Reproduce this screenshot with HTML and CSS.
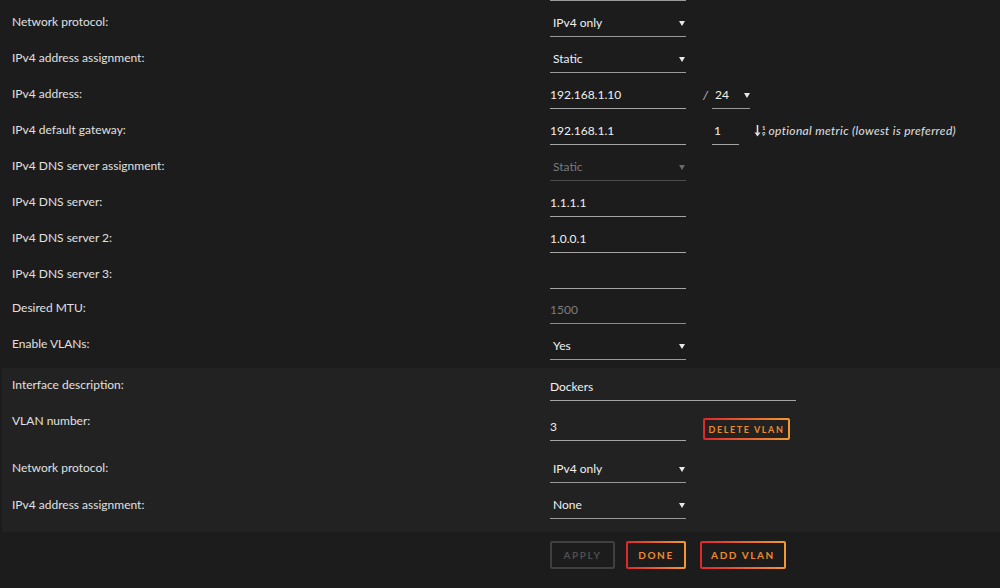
FILE: index.html
```html
<!DOCTYPE html>
<html lang="en">
<head>
    <meta charset="UTF-8">
    <meta name="viewport" content="width=device-width, initial-scale=1.0">
    <title>Network Settings</title>
    <link rel="stylesheet" href="styles.css">
</head>
<body>
    <div class="page">
        <!-- tail of the field above, scrolled off -->
        <div class="prev-row"><div class="prev-line"></div></div>

        <div class="row">
            <label class="label">Network protocol:</label>
            <div class="control"><div class="select">IPv4 only</div></div>
        </div>
        <div class="row">
            <label class="label">IPv4 address assignment:</label>
            <div class="control"><div class="select">Static</div></div>
        </div>
        <div class="row">
            <label class="label">IPv4 address:</label>
            <div class="control">
                <div class="input">192.168.1.10</div>
                <span class="slash">/</span>
                <div class="select select-small">24</div>
            </div>
        </div>
        <div class="row">
            <label class="label">IPv4 default gateway:</label>
            <div class="control">
                <div class="input">192.168.1.1</div>
                <div class="input input-metric">1</div>
                <span class="sort-icon">
                    <svg width="7" height="12" viewBox="0 0 7 12"><path d="M3.5 0v9" stroke="#ddd" stroke-width="1.6"/><path d="M0.5 7.5h6L3.5 11.5z" fill="#ddd"/></svg>
                    <span class="sort-nums"><span>1</span><span>9</span></span>
                </span>
                <span class="hint">optional metric (lowest is preferred)</span>
            </div>
        </div>
        <div class="row">
            <label class="label">IPv4 DNS server assignment:</label>
            <div class="control"><div class="select disabled">Static</div></div>
        </div>
        <div class="row">
            <label class="label">IPv4 DNS server:</label>
            <div class="control"><div class="input">1.1.1.1</div></div>
        </div>
        <div class="row">
            <label class="label">IPv4 DNS server 2:</label>
            <div class="control"><div class="input">1.0.0.1</div></div>
        </div>
        <div class="row">
            <label class="label">IPv4 DNS server 3:</label>
            <div class="control"><div class="input"></div></div>
        </div>
        <div class="row">
            <label class="label">Desired MTU:</label>
            <div class="control"><div class="input placeholder">1500</div></div>
        </div>
        <div class="row">
            <label class="label">Enable VLANs:</label>
            <div class="control"><div class="select">Yes</div></div>
        </div>

        <!-- VLAN block -->
        <div class="vlan">
            <div class="row vrow-desc">
                <label class="label">Interface description:</label>
                <div class="control"><div class="input input-wide">Dockers</div></div>
            </div>
            <div class="row vrow-number">
                <label class="label">VLAN number:</label>
                <div class="control">
                    <div class="input">3</div>
                    <button class="btn btn-small">DELETE VLAN</button>
                </div>
            </div>
            <div class="row vrow-proto">
                <label class="label">Network protocol:</label>
                <div class="control"><div class="select">IPv4 only</div></div>
            </div>
            <div class="row vrow-assign">
                <label class="label">IPv4 address assignment:</label>
                <div class="control"><div class="select">None</div></div>
            </div>
        </div>

        <div class="actions">
            <button class="btn btn-disabled">APPLY</button>
            <button class="btn btn-done">DONE</button>
            <button class="btn btn-add">ADD VLAN</button>
        </div>
    </div>
</body>
</html>
```

FILE: styles.css
```css
html, body {
    margin: 0;
    padding: 0;
    background-color: #1c1c1c;
}
body {
    font-family: Lato, "Open Sans", sans-serif;
    font-size: 12px;
    color: #e2e2e2;
}
.page {
    width: 1000px;
    height: 588px;
    overflow: hidden;
}
.prev-row {
    height: 1px;
    padding-left: 550px;
}
.prev-line {
    width: 136px;
    height: 1px;
    background-color: #9a9a9a;
}
.row {
    display: flex;
    height: 36px;
}
.label {
    width: 538px;
    padding-left: 12px;
    margin-top: 13px;
    line-height: 16px;
    color: #e0e0e0;
}
.control {
    display: flex;
    align-items: flex-start;
    margin-top: 8px;
}
.input, .select {
    position: relative;
    box-sizing: border-box;
    width: 136px;
    height: 28px;
    line-height: 28px;
    border-bottom: 1px solid #a5a5a5;
    color: #f0f0f0;
    font-size: 12px;
}
.select {
    padding-left: 3px;
    border-bottom-color: #9a9a9a;
}
.select::after {
    content: "";
    position: absolute;
    right: 1px;
    top: 12px;
    border-left: 3px solid transparent;
    border-right: 3px solid transparent;
    border-top: 5px solid #e8e8e8;
}
.select.disabled {
    color: #7a7a7a;
    border-bottom-color: #4a4a4a;
}
.select.disabled::after {
    border-top-color: #6a6a6a;
}
.input.placeholder {
    color: #7d7d7d;
    border-bottom-color: #8a8a8a;
}
.slash {
    margin-left: 17px;
    width: 9px;
    line-height: 28px;
    color: #d0d0d0;
    font-style: italic;
}
.select-small {
    width: 38px;
    margin-left: 0;
}
.select-small::after {
    right: 0;
}
.input-metric {
    width: 27px;
    margin-left: 26px;
    padding-left: 2px;
}
.sort-icon {
    display: inline-flex;
    align-items: center;
    margin-left: 15px;
    height: 28px;
    gap: 1px;
}
.sort-nums {
    display: flex;
    flex-direction: column;
    font-size: 6px;
    line-height: 6px;
    font-weight: bold;
    color: #ddd;
}
.hint {
    margin-left: 3px;
    line-height: 28px;
    font-style: italic;
    letter-spacing: 0.33px;
    color: #e0e0e0;
}
.row:nth-child(10) .label,
.row:nth-child(11) .label {
    margin-top: 11px;
}
.row:nth-child(10) .control,
.row:nth-child(11) .control {
    margin-top: 7px;
}

/* VLAN block */
.vlan {
    margin-top: 7px;
    margin-left: 2px;
    padding-bottom: 13px;
    background-color: #222222;
}
.vlan .label {
    width: 538px;
    padding-left: 10px;
}
.vrow-desc {
    height: 33px;
}
.vrow-desc .control {
    margin-top: 5px;
}
.vrow-desc .label {
    margin-top: 9px;
}
.input-wide {
    width: 246px;
}
.vrow-number {
    height: 40px;
}
.vrow-number .label {
    margin-top: 12px;
}
.vrow-number .control {
    margin-top: 12px;
}
.vrow-proto {
    height: 41px;
}
.vrow-proto .label {
    margin-top: 19px;
}
.vrow-proto .control {
    margin-top: 14px;
}
.vrow-assign {
    height: 37px;
}
.vrow-assign .label {
    margin-top: 15px;
}
.vrow-assign .control {
    margin-top: 9px;
}

/* buttons */
.btn {
    box-sizing: border-box;
    height: 28px;
    padding: 0;
    font-family: Lato, "Open Sans", sans-serif;
    font-size: 10px;
    font-weight: bold;
    letter-spacing: 1.6px;
    color: #ec8a2c;
    cursor: pointer;
    border: 2px solid transparent;
    border-radius: 2px;
    background: linear-gradient(#1c1c1c, #1c1c1c) padding-box,
                linear-gradient(90deg, #e0262a, #f29a32) border-box;
}
.btn-small {
    width: 87px;
    height: 22px;
    margin-left: 17px;
    margin-top: 5px;
    font-size: 9px;
    background: linear-gradient(#222222, #222222) padding-box,
                linear-gradient(90deg, #e0262a, #f29a32) border-box;
}
.actions {
    display: flex;
    padding-left: 550px;
    margin-top: 9px;
}
.btn-disabled {
    width: 65px;
    color: #4f4f4f;
    border-color: #3f3f3f;
    background: #1c1c1c;
    cursor: default;
}
.btn-done {
    width: 60px;
    margin-left: 11px;
}
.btn-add {
    width: 86px;
    margin-left: 14px;
}
```
